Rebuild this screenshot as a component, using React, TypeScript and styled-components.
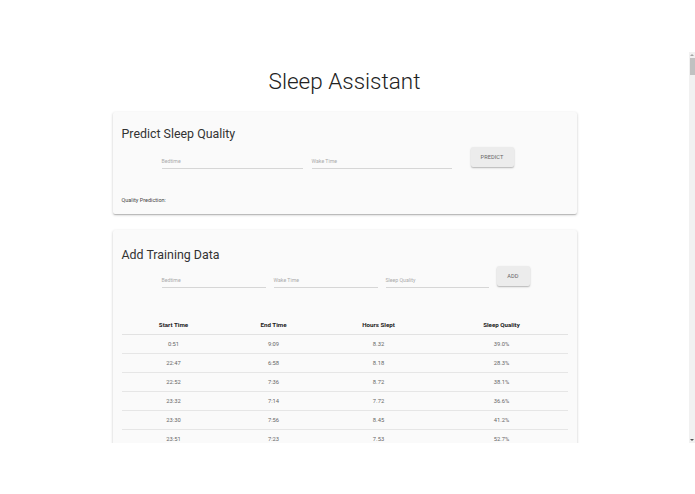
import React from "react";
import styled, { createGlobalStyle } from "styled-components";

const Global = createGlobalStyle`
  html, body { margin: 0; padding: 0; background: #ffffff; }
  body { font-family: Roboto, "Liberation Sans", Arial, sans-serif; color: #333; }
  * { box-sizing: border-box; }
`;

const Viewport = styled.div`
  margin-top: 52px;
  width: 695px;
  height: 391px;
  display: flex;
  background: #ffffff;
`;

const Content = styled.main`
  flex: 1;
  min-width: 0;
  height: 100%;
  overflow: hidden;
  padding-top: 16px;
`;

const ScrollTrack = styled.div`
  width: 6px;
  height: 100%;
  background: #f1f1f1;
  display: flex;
  flex-direction: column;
  align-items: center;
`;

const Arrow = styled.div<{ $down?: boolean }>`
  width: 6px;
  height: 6px;
  display: flex;
  align-items: center;
  justify-content: center;
  &::before {
    content: "";
    width: 0;
    height: 0;
    border-left: 2px solid transparent;
    border-right: 2px solid transparent;
    ${(p) =>
      p.$down
        ? "border-top: 2px solid #505050;"
        : "border-bottom: 2px solid #a3a3a3;"}
  }
`;

const Thumb = styled.div`
  width: 5px;
  height: 17px;
  background: #c1c1c1;
`;

const TrackFill = styled.div`
  flex: 1;
`;

const Title = styled.h1`
  margin: 0 0 18px;
  text-align: center;
  font-family: Roboto, "Liberation Sans", sans-serif;
  font-weight: 300;
  font-size: 22.5px;
  line-height: 26px;
  color: #222;
`;

const Card = styled.section<{ $top: number; $bottom?: number }>`
  width: 464px;
  margin: 0 auto 16px;
  background: #fafafa;
  padding: ${(p) => p.$top}px 9px ${(p) => p.$bottom ?? 10}px;
  box-shadow: 0 1px 3px rgba(0, 0, 0, 0.2), 0 1px 1px rgba(0, 0, 0, 0.1),
    0 2px 1px -1px rgba(0, 0, 0, 0.08);
  border-radius: 2px;
`;

const CardTitle = styled.h2<{ $gap: number }>`
  margin: 0 0 ${(p) => p.$gap}px;
  font-family: Roboto, "Liberation Sans", sans-serif;
  font-weight: 400;
  font-size: 12.4px;
  line-height: 16px;
  color: #333;
`;

const FormRow = styled.div`
  display: flex;
  align-items: flex-start;
  margin-left: 40px;
`;

const Field = styled.div<{ $w: number; $gap: number }>`
  width: ${(p) => p.$w}px;
  margin-right: ${(p) => p.$gap}px;
  height: 22px;
  border-bottom: 1px solid #d6d6d6;
  display: flex;
  align-items: center;
  padding-top: 6px;
  font-size: 5.2px;
  color: #ababab;
`;

const Button = styled.button<{ $w: number }>`
  width: ${(p) => p.$w}px;
  height: 20px;
  border: none;
  border-radius: 2px;
  background: #ececec;
  box-shadow: 0 1px 2px rgba(0, 0, 0, 0.22), 0 1px 1px rgba(0, 0, 0, 0.08);
  font-family: Roboto, "Liberation Sans", sans-serif;
  font-size: 5.6px;
  font-weight: 400;
  letter-spacing: 0.1px;
  color: #666;
  padding: 0;
  text-transform: uppercase;
`;

const Result = styled.div`
  margin-top: 27px;
  font-size: 5.5px;
  line-height: 8px;
  color: #444;
`;

const Table = styled.table`
  width: 100%;
  margin-top: 27px;
  border-collapse: collapse;
  table-layout: fixed;
`;

const Head = styled.th`
  height: 19px;
  padding: 1px 0 0;
  text-align: center;
  font-size: 6.2px;
  font-weight: 700;
  color: #222;
  border-bottom: 1px solid #e2e2e2;
`;

const Cell = styled.td`
  height: 19px;
  padding: 0;
  text-align: center;
  font-size: 5.8px;
  color: #666;
  border-bottom: 1px solid #e6e6e6;
`;

type Row = [string, string, string, string];

const rows: Row[] = [
  ["0:51", "9:09", "8.32", "39.0%"],
  ["22:47", "6:58", "8.18", "28.3%"],
  ["22:52", "7:36", "8.72", "38.1%"],
  ["23:32", "7:14", "7.72", "36.6%"],
  ["23:30", "7:56", "8.45", "41.2%"],
  ["23:51", "7:23", "7.53", "52.7%"],
];

export default function App() {
  return (
    <>
      <Global />
      <Viewport>
        <Content>
          <Title>Sleep Assistant</Title>

          <Card $top={14}>
            <CardTitle $gap={5}>Predict Sleep Quality</CardTitle>
            <FormRow>
              <Field $w={141} $gap={9}>Bedtime</Field>
              <Field $w={140} $gap={19}>Wake Time</Field>
              <Button $w={43}>Predict</Button>
            </FormRow>
            <Result>Quality Prediction:</Result>
          </Card>

          <Card $top={17}>
            <CardTitle $gap={3}>Add Training Data</CardTitle>
            <FormRow>
              <Field $w={104} $gap={8}>Bedtime</Field>
              <Field $w={104} $gap={8}>Wake Time</Field>
              <Field $w={103} $gap={8}>Sleep Quality</Field>
              <Button $w={33}>Add</Button>
            </FormRow>
            <Table>
              <colgroup>
                <col style={{ width: 104 }} />
                <col style={{ width: 96 }} />
                <col style={{ width: 114 }} />
                <col />
              </colgroup>
              <thead>
                <tr>
                  <Head>Start Time</Head>
                  <Head>End Time</Head>
                  <Head>Hours Slept</Head>
                  <Head>Sleep Quality</Head>
                </tr>
              </thead>
              <tbody>
                {rows.map((r, i) => (
                  <tr key={i}>
                    {r.map((c, j) => (
                      <Cell key={j}>{c}</Cell>
                    ))}
                  </tr>
                ))}
              </tbody>
            </Table>
          </Card>
        </Content>
        <ScrollTrack>
          <Arrow />
          <Thumb />
          <TrackFill />
          <Arrow $down />
        </ScrollTrack>
      </Viewport>
    </>
  );
}
